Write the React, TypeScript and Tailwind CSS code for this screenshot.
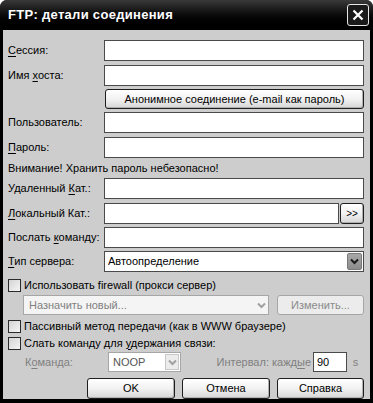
import React from 'react';

const font = "font-['Liberation_Sans',Arial,sans-serif]";

const U = ({ children }: { children: React.ReactNode }) => <span className="underline underline-offset-2">{children}</span>;

const Input = ({ className = '', value = '' }: { className?: string; value?: string }) => (
  <div className={`h-[21px] bg-white border border-[#4a4a4a] flex items-center px-[3px] ${className}`}>{value}</div>
);

const Chevron = ({ color }: { color: string }) => (
  <svg width="9" height="7" viewBox="0 0 9 7">
    <path d="M1 1.5 L4.5 5 L8 1.5" fill="none" stroke={color} strokeWidth="2" />
  </svg>
);

const Button = ({ children, className = '', disabled = false }: { children: React.ReactNode; className?: string; disabled?: boolean }) => (
  <div
    className={`flex items-center justify-center rounded-[3px] border ${
      disabled
        ? 'border-[#a6a6a6] text-[#8a8a8a] bg-[#ececec]'
        : 'border-[#1e1e1e] text-black bg-gradient-to-b from-white via-[#f2f2f2] to-[#d6d6d6] shadow-[inset_-1px_-1px_0_#b0b0b0]'
    } ${className}`}
  >
    {children}
  </div>
);

const Check = () => (
  <div className="w-[13px] h-[13px] border border-[#2a2a2a] bg-gradient-to-br from-[#d4d4d4] to-[#f6f6f6] shrink-0" />
);

const Row = ({ label, className = '', children }: { label: React.ReactNode; className?: string; children?: React.ReactNode }) => (
  <div className={`flex items-center ${className}`}>
    <div className="w-[96px] shrink-0">{label}</div>
    <div className="flex-1 flex">{children ?? <Input className="flex-1" />}</div>
  </div>
);

export default function App() {
  return (
    <div className={`w-[373px] h-[403px] bg-black rounded-t-[7px] flex flex-col ${font} text-[11px] text-black`}>
      <div className="h-[30px] flex items-center justify-between pl-[8px] pr-[4px] bg-gradient-to-b from-[#3a3a3a] via-[#0a0a0a] to-black rounded-t-[7px]">
        <span className="text-white font-bold text-[13px] tracking-[0.3px]">FTP: детали соединения</span>
        <div className="w-[22px] h-[22px] rounded-[3px] border border-[#e6e6e6] bg-[#1a1a1a] flex items-center justify-center">
          <svg width="12" height="12" viewBox="0 0 12 12">
            <path d="M1.5 1.5 L10.5 10.5 M10.5 1.5 L1.5 10.5" stroke="white" strokeWidth="2.2" />
          </svg>
        </div>
      </div>

      <div className="flex-1 mx-[3px] mb-[4px] bg-[#cdcdcd] pl-[5px] pr-[6px] pt-[10px] flex flex-col">
        <Row label={<><U>С</U>ессия:</>} />
        <Row label={<>Имя <U>х</U>оста:</>} className="mt-[4px]" />
        <div className="flex mt-[3px] pl-[97px]">
          <Button className="flex-1 h-[20px]">Анонимное соединение (e-mail как пароль)</Button>
        </div>
        <Row label="Пользователь:" className="mt-[3px]" />
        <Row label={<><U>П</U>ароль:</>} className="mt-[4px]" />
        <div className="h-[16px] mt-[2px] flex items-center">Внимание! Хранить пароль небезопасно!</div>
        <Row label={<>Удаленный <U>К</U>ат.:</>} className="mt-[2px]" />
        <Row label={<><U>Л</U>окальный Кат.:</>} className="mt-[4px]">
          <Input className="flex-1" />
          <Button className="w-[24px] h-[21px] ml-[1px] text-[10px]">&gt;&gt;</Button>
        </Row>
        <Row label={<>Послать <U>к</U>оманду:</>} className="mt-[3px]" />
        <Row label={<><U>Т</U>ип сервера:</>} className="mt-[3px]">
          <div className="flex-1 h-[21px] bg-white border border-[#4a4a4a] flex items-center pl-[3px] pr-[1px]">
            <span className="flex-1">Автоопределение</span>
            <div className="w-[15px] h-[17px] bg-gradient-to-b from-[#a8a8a8] to-[#8c8c8c] border border-[#7a7a7a] rounded-[2px] flex items-center justify-center">
              <Chevron color="#1a1a1a" />
            </div>
          </div>
        </Row>

        <div className="flex items-center gap-[3px] mt-[6px] h-[14px]">
          <Check />
          <span>Использовать firewall (прокси сервер)</span>
        </div>
        <div className="flex items-center mt-[3px] pl-[15px]">
          <div className="w-[246px] h-[20px] bg-[#f4f4f4] border border-[#a6a6a6] flex items-center pl-[5px] pr-[1px] text-[#808080]">
            <span className="flex-1">Назначить новый...</span>
            <div className="w-[12px] h-[16px] flex items-center justify-center">
              <Chevron color="#a0a0a0" />
            </div>
          </div>
          <div className="flex-1" />
          <Button disabled className="w-[87px] h-[20px]">Изменить...</Button>
        </div>

        <div className="flex items-center gap-[3px] mt-[4px] h-[14px]">
          <Check />
          <span>Пассивный метод передачи (как в WWW браузере)</span>
        </div>
        <div className="flex items-center gap-[3px] mt-[3px] h-[14px]">
          <Check />
          <span>Слать команду для <U>у</U>держания связи:</span>
        </div>

        <div className="flex items-center mt-[2px] h-[20px]">
          <div className="w-[100px] pl-[17px] text-[#808080]">
            К<U>о</U>манда:
          </div>
          <div className="w-[73px] h-[20px] bg-white border border-[#a6a6a6] flex items-center pl-[4px] pr-[1px] text-[#555]">
            <span className="flex-1">NOOP</span>
            <div className="w-[14px] h-[16px] bg-[#ececec] border border-[#c8c8c8] flex items-center justify-center">
              <Chevron color="#a0a0a0" />
            </div>
          </div>
          <div className="flex-1 text-right pr-[2px] text-[#808080]">
            Интервал: кажд<U>ы</U>е
          </div>
          <div className="w-[34px] h-[20px] bg-white border border-[#4a4a4a] flex items-center pl-[3px]">90</div>
          <div className="w-[17px] text-center text-[#808080]">s</div>
        </div>

        <div className="flex justify-end gap-[7px] mt-[6px]">
          <Button className="w-[88px] h-[21px]">OK</Button>
          <Button className="w-[88px] h-[21px]">Отмена</Button>
          <Button className="w-[87px] h-[21px]">Справка</Button>
        </div>
      </div>
    </div>
  );
}
